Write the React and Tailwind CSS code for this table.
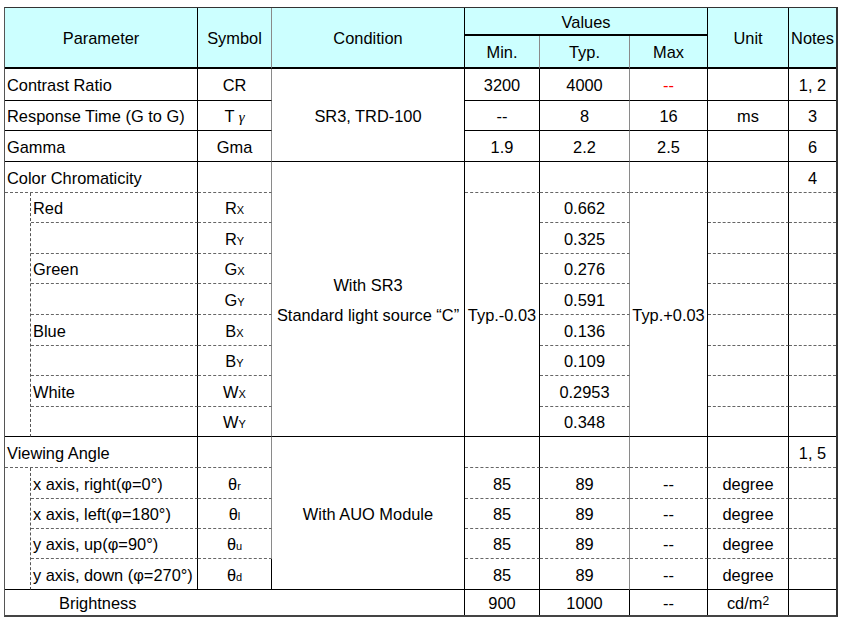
const right = {
  s: 'border-r border-r-black',
  g: 'border-r border-r-[#8a8a8a]',
  d: 'border-r border-r-[#555] [border-right-style:dashed]!',
  n: '',
};

const bottom = {
  s: 'border-b border-b-black',
  t: 'border-b-2 border-b-black',
  d: 'border-b border-b-[#666] [border-bottom-style:dashed]!',
  n: '',
};

function Td({ r = 's', b = 's', left = false, className = '', children, ...props }) {
  const cls = [
    right[r],
    bottom[b],
    left ? 'text-left pl-[2px]' : 'text-center',
    'pt-[2px] pb-0 align-middle whitespace-nowrap',
    className,
  ].join(' ');
  return (
    <td className={cls} {...props}>
      {children}
    </td>
  );
}

function Sym({ main, sub }) {
  return (
    <span>
      {main}
      <span className="text-[11px]">{sub}</span>
    </span>
  );
}

const chroma = [
  ['Red', 'R', 'X', '0.662'],
  ['', 'R', 'Y', '0.325'],
  ['Green', 'G', 'X', '0.276'],
  ['', 'G', 'Y', '0.591'],
  ['Blue', 'B', 'X', '0.136'],
  ['', 'B', 'Y', '0.109'],
  ['White', 'W', 'X', '0.2953'],
  ['', 'W', 'Y', '0.348'],
];
const chromaH = ['h-[30px]', 'h-[31px]', 'h-[30px]', 'h-[31px]', 'h-[31px]', 'h-[30px]', 'h-[31px]', 'h-[30px]'];

const angles = [
  ['x axis, right(φ=0°)', 'r'],
  ['x axis, left(φ=180°)', 'l'],
  ['y axis, up(φ=90°)', 'u'],
  ['y axis, down (φ=270°)', 'd'],
];
const angleH = ['h-[31px]', 'h-[30px]', 'h-[30px]', 'h-[31px]'];

export default function App() {
  return (
    <div className="min-h-[626px] w-[847px] bg-white pl-[4px] pt-[7px] text-[16.4px] leading-none text-black font-['Liberation_Sans',Arial,sans-serif]">
      <div className="w-[834px] border-t border-l border-t-[#333] border-l-[#555] border-r-2 border-b-2 border-r-[#333] border-b-[#444]">
        <table className="table-fixed border-separate border-spacing-0 w-[831px]">
          <colgroup>
            <col className="w-[26px]" />
            <col className="w-[167px]" />
            <col className="w-[74px]" />
            <col className="w-[193px]" />
            <col className="w-[75px]" />
            <col className="w-[90px]" />
            <col className="w-[78px]" />
            <col className="w-[81px]" />
            <col className="w-[47px]" />
          </colgroup>
          <thead className="bg-[#ccffff]">
            <tr className="h-[28px]">
              <Td colSpan={2} rowSpan={2} r="s" b="t">Parameter</Td>
              <Td rowSpan={2} r="g" b="t">Symbol</Td>
              <Td rowSpan={2} r="s" b="t">Condition</Td>
              <Td colSpan={3} r="s" b="t">Values</Td>
              <Td rowSpan={2} r="s" b="t">Unit</Td>
              <Td rowSpan={2} r="n" b="t">Notes</Td>
            </tr>
            <tr className="h-[33px]">
              <Td r="g" b="t">Min.</Td>
              <Td r="g" b="t">Typ.</Td>
              <Td r="s" b="t">Max</Td>
            </tr>
          </thead>
          <tbody>
            <tr className="h-[32px]">
              <Td colSpan={2} left>Contrast Ratio</Td>
              <Td r="g">CR</Td>
              <Td rowSpan={3}>SR3, TRD-100</Td>
              <Td>3200</Td>
              <Td r="g">4000</Td>
              <Td className="text-[#ff0000]">--</Td>
              <Td></Td>
              <Td r="n">1, 2</Td>
            </tr>
            <tr className="h-[30px]">
              <Td colSpan={2} left>Response Time (G to G)</Td>
              <Td r="g">
                T <span className="font-['Liberation_Serif',serif] italic text-[15px]">γ</span>
              </Td>
              <Td>--</Td>
              <Td r="g">8</Td>
              <Td>16</Td>
              <Td>ms</Td>
              <Td r="n">3</Td>
            </tr>
            <tr className="h-[31px]">
              <Td colSpan={2} left>Gamma</Td>
              <Td r="g">Gma</Td>
              <Td>1.9</Td>
              <Td r="g">2.2</Td>
              <Td>2.5</Td>
              <Td></Td>
              <Td r="n">6</Td>
            </tr>

            <tr className="h-[31px]">
              <Td colSpan={2} left b="d">Color Chromaticity</Td>
              <Td r="g" b="d"></Td>
              <Td rowSpan={9}>
                <div className="leading-[30px]">
                  <div>With SR3</div>
                  <div>Standard light source “C”</div>
                </div>
              </Td>
              <Td b="d"></Td>
              <Td r="g" b="d"></Td>
              <Td b="d"></Td>
              <Td b="d"></Td>
              <Td r="n" b="d">4</Td>
            </tr>
            {chroma.map(([label, m, s, typ], i) => {
              const last = i === chroma.length - 1;
              const b = last ? 's' : 'd';
              return (
                <tr key={i} className={chromaH[i]}>
                  {i === 0 && <Td rowSpan={8} r="d"></Td>}
                  <Td left b={b} className="pl-[1px]">{label}</Td>
                  <Td r="g" b={b}><Sym main={m} sub={s} /></Td>
                  {i === 0 && <Td rowSpan={8}>Typ.-0.03</Td>}
                  <Td r="g" b={b}>{typ}</Td>
                  {i === 0 && <Td rowSpan={8}>Typ.+0.03</Td>}
                  <Td b={b}></Td>
                  <Td r="n" b={b}></Td>
                </tr>
              );
            })}

            <tr className="h-[31px]">
              <Td colSpan={2} left b="d">Viewing Angle</Td>
              <Td r="g" b="d"></Td>
              <Td rowSpan={5}>With AUO Module</Td>
              <Td b="d"></Td>
              <Td r="g" b="d"></Td>
              <Td b="d"></Td>
              <Td b="d"></Td>
              <Td r="n" b="d">1, 5</Td>
            </tr>
            {angles.map(([label, s], i) => {
              const last = i === angles.length - 1;
              const b = last ? 's' : 'd';
              return (
                <tr key={label} className={angleH[i]}>
                  {i === 0 && <Td rowSpan={4} r="d"></Td>}
                  <Td left b={b} className="pl-[1px]">{label}</Td>
                  <Td r={last ? 's' : 'g'} b={b}>
                    θ<span className="text-[11px]">{s}</span>
                  </Td>
                  <Td b={b}>85</Td>
                  <Td r="g" b={b}>89</Td>
                  <Td b={b}>--</Td>
                  <Td b={b}>degree</Td>
                  <Td r="n" b={b}></Td>
                </tr>
              );
            })}

            <tr className="h-[25px]">
              <Td colSpan={4} left b="n" className="pl-[54px]">Brightness</Td>
              <Td b="n">900</Td>
              <Td b="n">1000</Td>
              <Td b="n">--</Td>
              <Td b="n">
                cd/m<span className="text-[12px] align-[4px]">2</span>
              </Td>
              <Td r="n" b="n"></Td>
            </tr>
          </tbody>
        </table>
      </div>
    </div>
  );
}
